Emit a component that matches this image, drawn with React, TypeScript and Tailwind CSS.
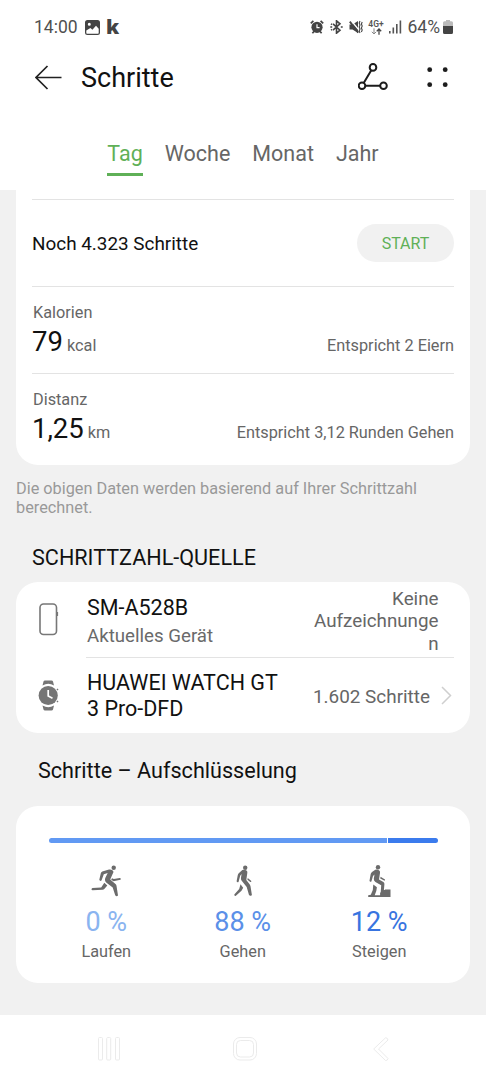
import type { ReactNode } from 'react';

const tabs = ['Tag', 'Woche', 'Monat', 'Jahr'];

function StatusBar() {
  return (
    <div className="h-[54px] pl-[34px] pr-[33px] flex items-center justify-between text-[#505050]">
      <div className="flex items-center">
        <span className="text-[17.5px] leading-5 w-[51px]">14:00</span>
        <svg width="15" height="15" viewBox="0 0 15 15" className="mr-[6px]">
          <path fillRule="evenodd" fill="#444" d="M2.5 0h10A2.5 2.5 0 0 1 15 2.500v10a2.500 2.500 0 0 1-2.500 2.500h-10A2.500 2.500 0 0 1 0 12.500v-10A2.500 2.500 0 0 1 2.500 0ZM1.300 10.500v2.200c0 .6.400 1 1 1h10.400c.6 0 1-.4 1-1V8.700L11 5.800l-3.600 4-2-1.800ZM4.300 2.800a1.500 1.500 0 1 0 0 3 1.500 1.500 0 0 0 0-3Z" />
        </svg>
        <span className="font-['Open_Sans'] font-extrabold text-[20px] leading-5 text-[#444]">k</span>
      </div>
      <div className="flex items-center">
        {/* Alarm */}
        <svg width="14" height="14" viewBox="0 0 14 14" fill="none" stroke="#444" className="mr-[6px]">
          <circle cx="7" cy="7.300" r="5.600" fill="#444" stroke="none" />
          <path d="M.8 3.400 3.400.8M13.200 3.400 10.600.8M2.400 13.300l1.500-1.800M11.600 13.300l-1.500-1.800" strokeWidth="1.700" />
          <path d="M7 4.300v3.300h2.600" stroke="#fff" strokeWidth="1.200" />
        </svg>
        {/* Bluetooth */}
        <svg width="13" height="14" viewBox="0 0 13 14" fill="none" stroke="#444" strokeWidth="1.600" className="mr-[6px]">
          <path d="m3 3.800 7 6.400-3.500 3V.8l3.500 3-7 6.400" />
          <path d="M.3 7h1.900M10.800 7h1.900M1 3.800l1 .7M1 10.200l1-.7" />
        </svg>
        {/* Muted / vibrate */}
        <svg width="14" height="14" viewBox="0 0 14 14" fill="none" stroke="#444" className="mr-[6px]">
          <path d="M.5 4.500h3L9 1v12L3.500 9.500h-3Z" fill="#444" stroke="none" />
          <path d="M2 .5 10 10" stroke="#fff" strokeWidth="1.300" />
          <path d="m.8 1.600 8.500 11" strokeWidth="1.800" />
          <path d="m11 1-.8 2 .8 2-.8 2 .8 2-.8 2 .8 2M13.200 2l-.8 2 .8 2-.8 2 .8 2-.8 2" strokeWidth="1.100" />
        </svg>
        {/* Network type */}
        <div className="w-[15px] h-[15px] mr-[5px] flex flex-col items-center">
          <span className="text-[8.5px] leading-[8px] font-semibold text-[#555]">4G+</span>
          <svg width="11" height="7" viewBox="0 0 11 7" fill="none" className="shrink-0">
            <path d="M3 .3v5.500M.8 3.800 3 6l2.200-2.200" stroke="#888" strokeWidth="1" />
            <path d="M8 6.800V1M5.800 3.200 8 1l2.200 2.200" stroke="#444" strokeWidth="1.300" />
          </svg>
        </div>
        <svg width="13" height="14" viewBox="0 0 13 14" fill="#555" className="mr-[6px]">
          <rect x="0" y="11" width="1.600" height="2.500" />
          <rect x="3.500" y="7.500" width="1.600" height="6" />
          <rect x="7" y="4" width="1.600" height="9.500" />
          <rect x="10.600" y="0.500" width="1.600" height="13" />
        </svg>
        <span className="text-[17.5px] leading-5">64%</span>
        <svg width="10" height="14" viewBox="0 0 10 14" className="ml-[3px]">
          <path d="M3 0h4v1.200h1.500A1.500 1.500 0 0 1 10 2.700V6H0V2.700a1.500 1.500 0 0 1 1.500-1.500H3Z" fill="#bbb" />
          <path d="M0 6h10v6.500A1.500 1.500 0 0 1 8.500 14h-7A1.500 1.500 0 0 1 0 12.500Z" fill="#444" />
        </svg>
      </div>
    </div>
  );
}

function Header() {
  return (
    <header className="h-[190px] shrink-0 bg-white">
      <StatusBar />
      <div className="h-[46px] pl-[35px] pr-[38px] flex items-center">
        <svg width="27" height="25" viewBox="0 0 27 25" fill="none" stroke="#222" strokeWidth="1.700">
          <path d="M12.500 1 1 12.500l11.500 11.500M1 12.500h25.500" />
        </svg>
        <h1 className="flex-1 mt-[2px] ml-[19px] text-[27px] leading-8 text-[#111]">Schritte</h1>
        <svg width="30" height="28" viewBox="0 0 30 28" fill="none" stroke="#1c1c1c" strokeWidth="2">
          <circle cx="15" cy="4.400" r="3.300" />
          <circle cx="4" cy="22.700" r="3.300" />
          <circle cx="25.500" cy="22.700" r="3.300" />
          <path d="M13.300 7.300 5.700 19.900M7.300 22.700h14.900" />
        </svg>
        <svg width="21" height="21" viewBox="0 0 21 21" fill="#1c1c1c" className="ml-[39px]">
          <circle cx="2.700" cy="2.700" r="2.400" />
          <circle cx="18.200" cy="2.700" r="2.400" />
          <circle cx="2.700" cy="17.700" r="2.400" />
          <circle cx="18.200" cy="17.700" r="2.400" />
        </svg>
      </div>
      <nav className="mt-[41px] flex justify-center gap-[22px]">
        {tabs.map((tab, i) => (
          <button
            key={tab}
            className={`text-[21.5px] leading-[26px] pb-[6px] border-b-3 ${
              i === 0 ? 'text-[#5fb057] border-[#5fb057]' : 'text-[#666] border-transparent'
            }`}
          >
            {tab}
          </button>
        ))}
      </nav>
    </header>
  );
}

function Metric({ label, value, unit, note }: { label: string; value: string; unit: string; note: string }) {
  return (
    <div className="h-[87px] border-t border-[#e3e3e3] pt-4 text-[16.3px] text-[#666]">
      <div className="leading-5 ml-px">{label}</div>
      <div className="mt-[3px] flex items-baseline justify-between leading-8">
        <div>
          <span className="text-[27.5px] text-[#111]">{value}</span>
          <span className="ml-[4px]">{unit}</span>
        </div>
        <span>{note}</span>
      </div>
    </div>
  );
}

function RunIcon() {
  return (
    <svg width="30" height="32" viewBox="0 0 30 32" fill="#6b6b6b">
      <circle cx="22.700" cy="2.800" r="2.200" />
      <path d="M11.300 6.600 18 4.500q4-.3 4.500 2.500l-3.300 7.500 5.300 4.500q.8.700 1 1.700L27 30.500q-1.500 1.600-2.800-.3l-2.500-7.700-6.500-5q-2-2-.8-4.700l2.300-4.800-3.900 1.300-2.300 6.200q-1.600 1.200-2.200-.7l1.500-6.500q.3-1.200 1.500-1.700Z" />
      <path d="m21 13.200 1.800.9 6-1q1.600.4.600 1.700l-6.900 1.500-2.300-1.500ZM13.300 17.700l3 2.700-3 3.600q-.6.700-1.700.8l-10.200.4q-2-1 0-2.300l8.800-.5Z" />
    </svg>
  );
}

function WalkIcon() {
  return (
    <svg width="30" height="32" viewBox="0 0 30 32" fill="#6b6b6b">
      <circle cx="17.200" cy="2.800" r="2.200" />
      <path d="m11.300 7.800 3-2.700q2.300-1 4.500.7.800 1 .5 2.300l-1 6.900 3.300 4.200q.7.900.9 2l1.400 8.700q-1.500 1.800-2.900.2l-2.300-8-5.200-6.600q-.8-1.200-.5-2.700l.6-3.700-1.400 1.700-1.700 6.200q-1.300 1-1.900-.7l1.200-6.200q.3-1.400 1.500-2.300Z" />
      <path d="m19.800 13 3.500 3q.3 1.200-1 1l-2.900-2.300ZM12.500 19.300l2.700 3.400-1.700 3-5.900 5.200q-1.500.2-1.300-1.400l4.900-5.500Z" />
    </svg>
  );
}

function ClimbIcon() {
  return (
    <svg width="30" height="32" viewBox="0 0 30 32" fill="#6b6b6b">
      <circle cx="14" cy="2.300" r="2.200" />
      <path d="m8 7 3.300-2.200q2.200-.8 4.200 1 .8 1 .5 2.300l-1 6.400 4.400 2.500q1.200.8 1 2.200L19.900 25h1V24.500H26.500V32H4.200v-1.800l2.600-.4 2-4.800.5-5.500 3.600 2.800-.6 3.700-1.600 4.200h5.400V27.500h.6l.5-7.300-5.800-3.200q-1.800-1.200-1.600-3.300l.7-4.100-1.500 1.500-1.600 5.400q-1.500 1-1.900-.7l1.100-6.300Q6.700 8 8 7Z" />
      <path d="m16.600 11.700 4.400 2.700q.4 1.300-.9 1.200l-3.900-2Z" />
    </svg>
  );
}

function Breakdown({ icon, value, label, color }: { icon: ReactNode; value: string; label: string; color: string }) {
  return (
    <div className="w-[136.5px] flex flex-col items-center">
      {icon}
      <div className={`mt-[9px] text-[27px] leading-8 ${color}`}>{value}</div>
      <div className="mt-1 text-[16.3px] leading-5 text-[#666]">{label}</div>
    </div>
  );
}

function Sources() {
  return (
    <section className="mt-[10px] h-[151px] rounded-[22px] bg-white pl-[18px] pr-4">
      <div className="flex h-[76px]">
        <div className="w-[52px] pt-[21px] pl-[5px]">
          <svg width="20" height="33" viewBox="0 0 20 33" fill="none" stroke="#777" strokeWidth="1.600">
            <rect x="1" y="1" width="16.500" height="30.500" rx="3.500" />
            <path d="M18.500 9v4" strokeWidth="1.200" />
          </svg>
        </div>
        <div className="flex-1 flex border-b border-[#e3e3e3]">
          <div className="flex-1 pt-3 pl-px">
            <div className="text-[21.5px] leading-7 text-[#111]">SM-A528B</div>
            <div className="mt-px text-[18.7px] leading-[26px] text-[#6a6a6a]">Aktuelles Gerät</div>
          </div>
          <div className="w-[126px] pt-[6px] mr-[15.5px] text-right text-[18.8px] leading-[22.3px] wrap-break-word text-[#666]">
            Keine Aufzeichnungen
          </div>
        </div>
      </div>
      <div className="flex h-[75px] items-center">
        <div className="w-[52px] pl-[4px]">
          <svg width="21" height="31" viewBox="0 0 21 31">
            <path d="m4.500 5.500 1-4Q5.800.5 7 .5h6.500q1.200 0 1.500 1l1 4Q10.300 2 4.500 5.500ZM4.500 25.500l1 4q.3 1 1.500 1h6.500q1.200 0 1.500-1l1-4q-5.700 3.500-11.500 0Z" fill="#757575" />
            <circle cx="10.200" cy="15.500" r="9.600" fill="#757575" />
            <path d="M10.200 10v6l4.300 2.300" fill="none" stroke="#fff" strokeWidth="1.700" />
            <path d="m19 9 1 1M19 22l1-1" stroke="#757575" strokeWidth="1.500" />
          </svg>
        </div>
        <div className="w-[200px] mt-px pl-px text-[21.5px] leading-[26px] text-[#111]">HUAWEI WATCH GT 3 Pro-DFD</div>
        <div className="flex-1 mt-1 whitespace-nowrap text-right text-[18.9px] text-[#666]">1.602 Schritte</div>
        <svg width="11" height="19" viewBox="0 0 11 19" fill="none" stroke="#cfcfcf" strokeWidth="1.500" className="ml-[11px] mr-[2px]">
          <path d="m1 1 8.500 8.500L1 18" />
        </svg>
      </div>
    </section>
  );
}

function NavigationBar() {
  return (
    <footer className="h-[65px] shrink-0 bg-white px-[97px] pt-[2px] flex items-center justify-between">
      <svg width="24" height="24" viewBox="0 0 24 24" fill="none" stroke="#ebebeb">
        <rect x="1.500" y="0.500" width="4" height="22.500" rx="1" />
        <rect x="9.700" y="0.500" width="4" height="22.500" rx="1" />
        <rect x="18.500" y="0.500" width="4" height="22.500" rx="1" />
      </svg>
      <svg width="24" height="24" viewBox="0 0 24 24" fill="none" stroke="#ebebeb" className="-ml-1">
        <rect x="0.500" y="0.500" width="23" height="22.500" rx="6.500" />
        <rect x="3.500" y="3.500" width="17" height="16.500" rx="4" />
      </svg>
      <svg width="16" height="24" viewBox="0 0 16 24" fill="none" stroke="#ebebeb">
        <path d="M12.500.8.700 12l11.800 11.500q2 .3 2.500-2L5.500 12 15 3q-.5-2.500-2.500-2.200Z" />
      </svg>
    </footer>
  );
}

export default function App() {
  return (
    <div className="w-full h-[1080px] flex flex-col overflow-hidden bg-[#f1f1f1] font-[Roboto,sans-serif]">
      <Header />
      <main className="flex-1 px-4">
        <section className="h-[275px] rounded-b-[22px] bg-white px-4 pt-[9px]">
          <div className="h-[87px] border-t border-[#e3e3e3] flex items-center justify-between">
            <span className="mt-[2px] text-[18.9px] text-[#111]">Noch 4.323 Schritte</span>
            <button className="w-[97px] h-[38px] rounded-full bg-[#f1f1f1] pt-[2px] text-[16px] text-[#5fb057]">START</button>
          </div>
          <Metric label="Kalorien" value="79" unit="kcal" note="Entspricht 2 Eiern" />
          <Metric label="Distanz" value="1,25" unit="km" note="Entspricht 3,12 Runden Gehen" />
        </section>
        <p className="mt-[14px] text-[16.3px] leading-[19px] text-[#999]">
          Die obigen Daten werden basierend auf Ihrer Schrittzahl berechnet.
        </p>
        <h2 className="mt-[27px] ml-4 text-[21.6px] leading-7 text-[#111]">SCHRITTZAHL-QUELLE</h2>
        <Sources />
        <h2 className="mt-[24px] ml-[22px] text-[21.6px] leading-7 text-[#111]">Schritte – Aufschlüsselung</h2>
        <section className="mt-[21px] h-[177px] rounded-[22px] bg-white pt-8 px-[22px]">
          <div className="ml-[11px] w-[389px] h-[5px] flex gap-px rounded-full overflow-hidden">
            <div className="w-[337.5px] bg-[#6199f3]" />
            <div className="flex-1 bg-[#3b7bed]" />
          </div>
          <div className="mt-[22px] flex">
            <Breakdown icon={<RunIcon />} value="0 %" label="Laufen" color="text-[#8ab4f0]" />
            <Breakdown icon={<WalkIcon />} value="88 %" label="Gehen" color="text-[#5b90e8]" />
            <Breakdown icon={<ClimbIcon />} value="12 %" label="Steigen" color="text-[#3874e0]" />
          </div>
        </section>
      </main>
      <NavigationBar />
    </div>
  );
}
